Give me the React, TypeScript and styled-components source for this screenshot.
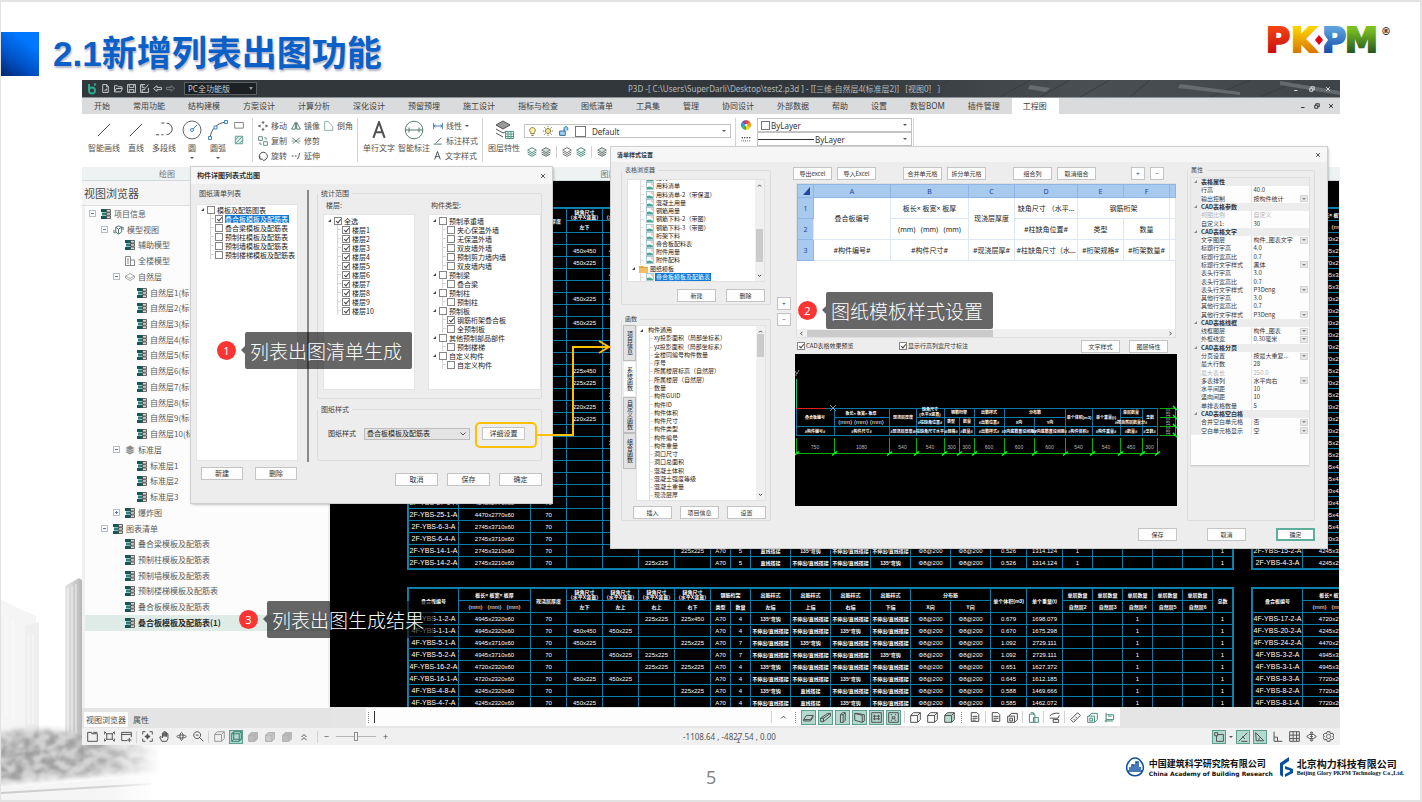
import React from "react";
import styled, { createGlobalStyle, css } from "styled-components";

const ui = `"Noto Sans CJK SC", "Noto Sans", sans-serif`;
const latin = `"Noto Sans", "Noto Sans CJK SC", sans-serif`;
const cad = `"Liberation Sans Narrow", "Liberation Sans", "Noto Sans CJK SC", sans-serif`;

const GlobalStyle = createGlobalStyle`
  * { box-sizing: border-box; }
  body { margin: 0; background: #fff; font-family: ${ui}; }
  button, input, select { font-family: inherit; margin: 0; }
  svg { display: block; flex: none; }
`;

/* ---------- slide ---------- */
const Slide = styled.main`
  position: relative;
  display: flex;
  flex-direction: column;
  min-height: 100vh;
  background: #fff;
  border: solid #e2e2e2;
  border-width: 2px 2px 2px 1px;
  overflow: hidden;
`;
const SlideHeader = styled.header`
  display: flex;
  height: 78px;
  flex: none;
  padding-right: 27px;
`;
const BlueBlock = styled.div`
  width: 38px;
  height: 44px;
  margin-top: 30px;
  background: linear-gradient(35deg, #00246c 0%, #0050c4 35%, #0078ff 75%);
`;
const SlideTitle = styled.h1`
  margin: 28px auto 0 14px;
  font: 700 35px/48px "Liberation Sans", "Noto Sans CJK SC", sans-serif;
  color: #0a60c6;
  text-shadow: 1px 2px 2px rgba(60, 70, 120, 0.4);
  white-space: nowrap;
`;
const PkpmMark = styled.svg`
  margin-top: 14px;
`;
const SlideFooter = styled.footer`
  position: relative;
  display: flex;
  align-items: flex-start;
  justify-content: flex-end;
  gap: 7px;
  height: 55px;
  flex: none;
  padding: 12px 16px 0 0;
`;
const PageNumber = styled.span`
  flex: 1;
  padding-left: 705px;
  font: 18px/40px "Noto Sans", sans-serif;
  color: #868686;
`;
const Company = styled.div`
  display: flex;
  align-items: center;
  gap: 4px;
  color: #111;
  white-space: nowrap;
`;
const CompanyName = styled.strong<{ $size: number }>`
  display: block;
  font: 700 ${(p) => p.$size}px/12px ${ui};
  color: #111;
`;
const CompanyEn = styled.small<{ $face: string }>`
  display: block;
  font: 700 6px/7px "${(p) => p.$face}", sans-serif;
`;
const Photo = styled.svg`
  position: absolute;
  left: 0;
  bottom: 0;
`;

/* ---------- application frame ---------- */
const AppFrame = styled.section`
  position: relative;
  display: flex;
  flex-direction: column;
  flex: 1;
  margin: 0 80px 0 81px;
  background: #f0f0f0;
  overflow: hidden;
`;
const TitleBar = styled.div`
  position: relative;
  display: flex;
  align-items: center;
  gap: 3px;
  height: 17px;
  flex: none;
  padding: 0 7px 0 5px;
  background: linear-gradient(90deg, #31373b 60%, #4a4f53 80%, #3e4448);
  color: #b4b8ba;
`;
const Streaks = styled.svg`
  position: absolute;
  right: 0;
  top: 0;
`;
const IconButton = styled.button<{ $on?: boolean; $w?: number }>`
  display: flex;
  align-items: center;
  justify-content: center;
  width: ${(p) => p.$w || 10}px;
  height: ${(p) => p.$w || 10}px;
  padding: 0;
  flex: none;
  background: ${(p) => (p.$on ? "#b4dad0" : "transparent")};
  border: 1px solid ${(p) => (p.$on ? "#5aa08f" : "transparent")};
  color: inherit;
`;
const ModeBox = styled.div`
  position: relative;
  width: 73px;
  height: 13px;
  margin-left: 6px;
`;
const ModeSelect = styled.select`
  appearance: none;
  display: block;
  width: 100%;
  height: 100%;
  padding: 0 3px;
  border: 1px solid #5d6164;
  background: #1d2022;
  color: #c9cccd;
  font: 8px/10px ${latin};
`;
const DocTitle = styled.div`
  flex: 1;
  padding-left: 368px;
  font: 8px/16px ${latin};
  white-space: pre;
  color: #b6babc;
`;
const WinControls = styled.div<{ $dark?: boolean }>`
  position: relative;
  display: flex;
  align-items: center;
  gap: 6px;
  margin-left: auto;
  padding-right: ${(p) => (p.$dark ? 5 : 0)}px;
  color: ${(p) => (p.$dark ? "#333" : "#d8dadb")};
`;
const TabStrip = styled.nav`
  display: flex;
  height: 17px;
  flex: none;
  padding-left: 1px;
  background: #dadbdc;
  border-top: 1px solid #8f9294;
`;
const RibbonTab = styled.button<{ $on?: boolean }>`
  padding: 0 12px 0 11px;
  border: 0;
  background: ${(p) => (p.$on ? "#fff" : "transparent")};
  color: #3e3e3e;
  font: 8px/16px ${latin};
  white-space: nowrap;
`;
const Ribbon = styled.div`
  display: flex;
  height: 67px;
  flex: none;
  background: #fff;
`;
const Group = styled.div<{ $w?: number }>`
  display: flex;
  flex-direction: column;
  ${(p) => (p.$w ? `width: ${p.$w}px; flex: none;` : "flex: 1;")}
`;
const GroupBody = styled.div<{ $gap: number; $line?: boolean }>`
  display: flex;
  gap: ${(p) => p.$gap}px;
  height: 44px;
  margin: 4px 0 5px;
  padding-left: ${(p) => (p.$line ? 5 : 6)}px;
  border-left: ${(p) => (p.$line ? "1px solid #d4d4d4" : "0")};
`;
const GroupName = styled.div`
  height: 14px;
  background: #eef2f3;
  border-bottom: 1px solid #d2d9db;
  font: 8px/13px ${ui};
  text-align: center;
  color: #777;
`;
const BigTool = styled.button`
  display: flex;
  flex-direction: column;
  align-items: center;
  min-width: 20px;
  padding: 0;
  border: 0;
  background: none;
  color: #505050;
  font: 8px/12px ${ui};
  white-space: nowrap;
`;
const IconSlot = styled.span`
  display: flex;
  align-items: center;
  height: 24px;
`;
const Caret = styled.i`
  width: 0;
  height: 0;
  border: 2px solid transparent;
  border-top-color: #555;
  border-bottom: 0;
`;
const LowCaret = styled(Caret)`
  margin-top: 3px;
`;
const ToolGrid = styled.div<{ $cols: number }>`
  display: grid;
  grid-template-columns: repeat(${(p) => p.$cols}, max-content);
  grid-auto-rows: 15px;
  column-gap: 4px;
  align-content: start;
`;
const SmallTool = styled.button`
  display: flex;
  align-items: center;
  gap: 3px;
  padding: 0;
  border: 0;
  background: none;
  color: #505050;
  font: 8px/14px ${ui};
  white-space: nowrap;
`;
const ToolStack = styled.div<{ $gap?: number; $pt?: number }>`
  display: flex;
  flex-direction: column;
  gap: ${(p) => p.$gap || 0}px;
  padding-top: ${(p) => p.$pt || 0}px;
`;
const LayerTools = styled.div`
  display: flex;
  align-items: center;
  gap: 4px;
  padding: 8px 0 0 3px;
  color: #777;
`;
const Rule = styled.i<{ $m?: number }>`
  width: 1px;
  height: 12px;
  margin: 0 ${(p) => (p.$m === undefined ? 2 : p.$m)}px;
  flex: none;
  background: #d2d2d2;
`;
const ComboBox = styled.div<{ $w: number }>`
  position: relative;
  display: flex;
  align-items: center;
  gap: 6px;
  width: ${(p) => p.$w}px;
  height: 14px;
  padding: 0 4px 0 3px;
  border: 1px solid #c3c3c3;
  background: #fff;
  color: #555;
`;
const ComboSelect = styled.select`
  appearance: none;
  flex: 1;
  min-width: 0;
  border: 0;
  background: none;
  font: 8px/11px "Noto Sans", sans-serif;
  color: #333;
`;
const TightSelect = styled(ComboSelect)`
  margin-left: -5px;
`;
const Swatch = styled.i<{ $s: number }>`
  width: ${(p) => p.$s}px;
  height: ${(p) => p.$s}px;
  border: 1px solid #777;
  background: #fff;
`;
const Stroke = styled.i`
  width: 56px;
  height: 1px;
  margin-left: -3px;
  background: #333;
`;

/* ---------- workspace ---------- */
const Workspace = styled.div`
  display: flex;
  flex: 1;
  min-height: 0;
`;
const Browser = styled.aside`
  display: flex;
  flex-direction: column;
  width: 248px;
  flex: none;
  background: #f0f0f0;
`;
const BrowserTitle = styled.h2`
  height: 25px;
  margin: 0;
  padding-left: 2px;
  border-bottom: 1px solid #dcdfe0;
  background: #f5f5f5;
  font: 400 11px/25px ${ui};
  color: #4a4a4a;
`;
const Tree = styled.ul`
  display: flex;
  flex-direction: column;
  flex: 1;
  margin: 0 2px 0 3px;
  padding: 0 0 77px;
  background: #fcfcfc;
  list-style: none;
`;
const TreeRow = styled.li<{ $level: number; $on?: boolean }>`
  display: flex;
  align-items: center;
  flex: 1;
  padding-left: ${(p) => 3 + p.$level * 12}px;
  background: ${(p) => (p.$on ? "#deebe7" : "none")};
  color: ${(p) => (p.$on ? "#2a2a2a" : "#5a5a5a")};
  font: ${(p) => (p.$on ? 700 : 400)} 8px/10px ${ui};
  white-space: nowrap;
  svg { margin: 0 3px 0 5px; }
`;
const Expander = styled.i<{ $show?: string }>`
  position: relative;
  width: 7px;
  height: 7px;
  margin-left: 1px;
  flex: none;
  border: 1px solid ${(p) => (p.$show ? "#b5bdc6" : "transparent")};
  &::before {
    content: "";
    position: absolute;
    left: 1px; right: 1px; top: 2px; height: 1px;
    background: ${(p) => (p.$show ? "#5a76ae" : "none")};
  }
  &::after {
    content: "";
    position: absolute;
    top: 1px; bottom: 1px; left: 2px; width: 1px;
    background: ${(p) => (p.$show === "+" ? "#5a76ae" : "none")};
  }
`;
const BrowserTabs = styled.div`
  display: flex;
  height: 20px;
  padding: 4px 0 1px 2px;
  background: #e4e4e4;
`;
const BrowserTab = styled.button<{ $on?: boolean }>`
  padding: 0 ${(p) => (p.$on ? 2 : 5)}px;
  border: 0;
  background: ${(p) => (p.$on ? "#fff" : "none")};
  color: #4a4a4a;
  font: 8px/14px ${ui};
`;
const Stage = styled.div`
  display: flex;
  flex-direction: column;
  flex: 1;
  min-width: 0;
`;
const Canvas = styled.div`
  display: flex;
  gap: 19px;
  flex: 1;
  min-height: 0;
  contain: size;
  margin-right: 1px;
  padding: 27px 0 0 78px;
  background: #000;
  overflow: hidden;
`;
const SheetColumn = styled.div`
  display: flex;
  flex-direction: column;
  gap: 19px;
  flex: none;
`;
const Sheet = styled.table`
  table-layout: fixed;
  width: 824px;
  border-collapse: collapse;
  outline: 1px solid #0f86b2;
  outline-offset: 0;
  color: #fff;
  font: 6px/10px ${cad};
  tr { height: 12px; }
  th, td {
    padding: 0;
    border: 1px solid #0b7dab;
    font-weight: 400;
    text-align: center;
    white-space: nowrap;
    overflow: hidden;
  }
  tbody td:first-child { font-size: 7px; }
`;
const Han = styled.span<{ $tight?: boolean }>`
  display: ${(p) => (p.$tight ? "block" : "inline")};
  font: 700 5px/${(p) => (p.$tight ? 5 : 9)}px ${cad};
`;
const CommandBar = styled.div`
  display: flex;
  align-items: center;
  height: 21px;
  flex: none;
  padding: 1px 0 2px 36px;
  background: #e5e5e5;
`;
const CommandInner = styled.div`
  display: flex;
  align-items: center;
  gap: 2px;
  width: 754px;
  height: 100%;
  background: #fdfdfd;
  color: #505050;
`;
const CommandInput = styled.input`
  flex: 1;
  min-width: 0;
  height: 12px;
  border: 0;
  border-left: 1px solid #333;
  background: none;
  font: 8px/12px ${ui};
`;
const Grip = styled.i`
  height: 11px;
  margin: 0 3px 0 2px;
  border-left: 1px dotted #8a8a8a;
`;
const StatusBar = styled.div`
  position: relative;
  display: flex;
  align-items: center;
  gap: 3px;
  height: 17px;
  flex: none;
  padding: 0 5px 0 3px;
  color: #555;
  font-size: 9px;
`;
const Coordinates = styled.span`
  flex: 1;
  padding-left: 292px;
  font: 8px/16px "Noto Sans", sans-serif;
  white-space: pre;
`;
const ZoomRange = styled.input`
  appearance: none;
  width: 40px;
  height: 9px;
  margin: 0 4px;
  background: linear-gradient(#b5b5b5, #b5b5b5) center / 100% 1px no-repeat;
  &::-webkit-slider-thumb {
    appearance: none;
    width: 4px;
    height: 9px;
    border: 1px solid #8d8d8d;
    background: #f4f4f4;
  }
`;
const StrayMark = styled.span`
  position: absolute;
  left: 654px;
  top: 9px;
  font: 8px/8px "Liberation Sans", sans-serif;
`;

/* ---------- dialogs ---------- */
const Dialog = styled.section<{ $x: number; $y: number; $w: number; $h: number; $size: number }>`
  position: absolute;
  left: ${(p) => p.$x}px;
  top: ${(p) => p.$y}px;
  width: ${(p) => p.$w}px;
  height: ${(p) => p.$h}px;
  display: flex;
  flex-direction: column;
  background: #ededed;
  box-shadow: 0 0 0 1px #cfcfcf, 1px 1px 3px rgba(0, 0, 0, 0.4);
  color: #333;
  font: ${(p) => p.$size}px/9px ${ui};
  white-space: nowrap;
`;
const DialogTitle = styled.header<{ $h: number }>`
  display: flex;
  align-items: center;
  justify-content: space-between;
  height: ${(p) => p.$h}px;
  flex: none;
  padding: 0 6px;
  background: #f6f6f6;
  font-weight: 700;
`;
const ListingBody = styled.div`
  display: flex;
  flex: 1;
  padding: 5px 10px 0 5px;
`;
const Col = styled.div<{ $w?: number; $gap?: number; $pl?: number }>`
  display: flex;
  flex-direction: column;
  gap: ${(p) => p.$gap || 0}px;
  padding-left: ${(p) => p.$pl || 0}px;
  ${(p) => (p.$w ? `width: ${p.$w}px; flex: none;` : "")}
`;
const Row = styled.div<{ $gap?: number; $end?: boolean; $pl?: number }>`
  display: flex;
  align-items: center;
  gap: ${(p) => p.$gap || 0}px;
  padding-left: ${(p) => p.$pl || 0}px;
  justify-content: ${(p) => (p.$end ? "flex-end" : "flex-start")};
`;
const VRule = styled.i`
  width: 2px;
  height: 272px;
  margin: 1px 8px 0 9px;
  background: #8a8a8a;
`;
const Caption = styled.div`
  padding-left: 3px;
  color: #444;
`;
const Fieldset = styled.fieldset<{ $h: number; $pad: string }>`
  display: flex;
  flex-direction: column;
  min-width: 0;
  height: ${(p) => p.$h}px;
  margin: 0;
  padding: ${(p) => p.$pad};
  border: 1px solid #dcdcdc;
  border-radius: 2px;
`;
const Legend = styled.legend`
  padding: 0 3px;
  line-height: 8px;
  color: #444;
`;
const PushButton = styled.button<{ $w?: number; $primary?: boolean }>`
  width: ${(p) => p.$w || 39}px;
  height: 13px;
  flex: none;
  padding: 0;
  background: #fdfdfd;
  border: ${(p) => (p.$primary ? "2px solid #5fae9c" : "1px solid #c4c4c4")};
  color: #333;
  font-size: inherit;
  line-height: 9px;
`;
const ListBox = styled.ul<{ $h: number; $pad?: string }>`
  position: relative;
  height: ${(p) => p.$h}px;
  margin: 0;
  padding: ${(p) => p.$pad || "0"};
  border: 1px solid #e4e4e4;
  background: #fff;
  list-style: none;
  overflow: hidden;
`;
const CheckRow = styled.li<{ $child?: boolean; $on?: boolean }>`
  display: flex;
  align-items: center;
  height: 9px;
  padding-left: ${(p) => (p.$child ? 14 : 0)}px;
  color: #222;
  ${(p) =>
    p.$child &&
    css`
      background:
        linear-gradient(#d5d5d5, #d5d5d5) 9px 0 / 1px 9px no-repeat,
        linear-gradient(#d5d5d5, #d5d5d5) 9px 4px / 4px 1px no-repeat;
    `}
  label { display: flex; align-items: center; gap: 2px; }
  span { line-height: 8px; padding: 0 1px 0 0; ${(p) => (p.$on ? "background:#0f78d4;color:#fff;" : "")} }
`;
const Twisty = styled.i`
  width: 0;
  height: 0;
  margin-right: 3px;
  border: solid transparent;
  border-width: 0 0 3px 3px;
  border-bottom-color: #444;
`;
const Check = styled.input.attrs({ type: "checkbox" })`
  appearance: none;
  position: relative;
  width: 8px;
  height: 8px;
  flex: none;
  border: 1px solid #858585;
  background: #fff;
  &:checked::after {
    content: "";
    position: absolute;
    left: 2px;
    top: 0;
    width: 2px;
    height: 4px;
    border: solid #444;
    border-width: 0 1px 1px 0;
    transform: rotate(40deg);
  }
`;
const CheckLabel = styled.label`
  display: flex;
  align-items: center;
  gap: 1px;
  line-height: 12px;
`;
const StyleSelect = styled.select`
  appearance: none;
  width: 106px;
  height: 12px;
  padding: 0 2px;
  border: 1px solid #bdbdbd;
  background: #e4e4e4;
  color: #222;
  font: 7px/9px ${ui};
`;
const SelectWrap = styled.div`
  position: relative;
  display: flex;
`;
const ArrowMark = styled.svg`
  position: absolute;
  right: 4px;
  top: 50%;
  margin-top: -2px;
  pointer-events: none;
`;
const StyleBody = styled.div`
  display: flex;
  flex: 1;
  padding: 4px 12px 0 10px;
`;
const Stepper = styled(Col)`
  width: 14px;
  margin: 0 4px 0 6px;
  padding-top: 131px;
  gap: 3px;
`;
const Editor = styled(Col)`
  width: 382px;
  margin-right: 10px;
  padding-top: 1px;
`;
const EditorTools = styled.div`
  display: flex;
  gap: 5px;
  height: 16px;
  margin-left: -2px;
`;
const Spacer = styled.i<{ $w: number }>`
  width: ${(p) => p.$w}px;
`;
const FileList = styled.ul<{ $h: number }>`
  display: flex;
  flex-direction: column;
  flex: none;
  height: ${(p) => p.$h}px;
  margin: 0;
  padding: 0;
  list-style: none;
`;
const FileBox = styled.div<{ $h: number; $end?: boolean; $w?: number }>`
  position: relative;
  display: flex;
  flex-direction: column;
  justify-content: ${(p) => (p.$end ? "flex-end" : "flex-start")};
  width: ${(p) => (p.$w ? `${p.$w}px` : "auto")};
  height: ${(p) => p.$h}px;
  flex: none;
  border: 1px solid #e2e2e2;
  background: #fff;
  overflow: hidden;
`;
const FileRow = styled.li<{ $pl: number; $on?: boolean }>`
  display: flex;
  align-items: center;
  gap: 1px;
  flex: 1;
  min-height: 0;
  padding-left: ${(p) => p.$pl}px;
  line-height: 8px;
  color: #222;
  ${(p) =>
    p.$pl > 12 &&
    css`
      background:
        linear-gradient(#dcdcdc, #dcdcdc) 12px 0 / 1px 9px no-repeat,
        linear-gradient(#dcdcdc, #dcdcdc) 12px 4px / 4px 1px no-repeat;
    `}
  span { padding: 0 1px; ${(p) => (p.$on ? "background:#0f78d4;color:#fff;" : "")} }
`;
const ScrollTrack = styled.div<{ $top: number; $h: number }>`
  position: absolute;
  top: 0;
  right: 0;
  bottom: 0;
  width: 9px;
  background: #f0f0f0;
  &::before {
    content: "";
    position: absolute;
    left: 1px;
    right: 1px;
    top: ${(p) => p.$top}px;
    height: ${(p) => p.$h}px;
    background: #cbcbcb;
  }
  svg { position: absolute; left: 2px; }
  svg:first-child { top: 3px; }
  svg:last-child { bottom: 3px; }
`;
const SideTabs = styled.div`
  display: flex;
  flex-direction: column;
  width: 13px;
  flex: none;
  height: 144px;
`;
const SideTab = styled.button<{ $on?: boolean }>`
  flex: 1;
  padding: 0;
  border: 1px solid ${(p) => (p.$on ? "#ececec" : "#bcbcbc")};
  background: ${(p) => (p.$on ? "#fff" : "#e2e2e2")};
  font-size: 6px;
  line-height: 10px;
  color: #222;
  writing-mode: vertical-rl;
  text-align: center;
`;
const GridPanel = styled.div`
  display: flex;
  flex-direction: column;
  justify-content: space-between;
  height: 155px;
  margin: 0 1px;
  border: 1px solid #dfdfdf;
  background: #fff;
`;
const Spread = styled.table`
  table-layout: fixed;
  width: 378px;
  border-collapse: collapse;
  font: 7px/9px ${latin};
  color: #222;
  th, td { padding: 0; border: 1px solid #dce8f6; font-weight: 400; text-align: center; overflow: hidden; white-space: pre; }
  th { background: #a9caef; border-color: #8fb5e3; color: #23459c; }
  thead tr { height: 13px; }
  tbody tr { height: 21px; }
`;
const HScroll = styled.div`
  display: flex;
  align-items: center;
  gap: 3px;
  height: 8px;
  padding: 0 2px;
  background: #f0f0f0;
  color: #555;
`;
const HThumb = styled.i`
  width: 186px;
  height: 7px;
  margin-right: auto;
  background: #cbcbcb;
`;
const EditorChecks = styled.div`
  display: flex;
  align-items: center;
  gap: 9px;
  height: 16px;
  padding: 0 9px 0 2px;
`;
const FirstCheck = styled.div`
  width: 93px;
`;
const SecondCheck = styled.div`
  flex: 1;
`;
const PropFrame = styled.div`
  flex: 1;
  margin-left: 2px;
  border: 1px solid #e0e0e0;
`;
const PropSheet = styled.div`
  height: 288px;
  background: #fdfdfd;
  border-bottom: 1px solid #ccc;
`;
const PropTable = styled.table`
  table-layout: fixed;
  width: 100%;
  height: 257px;
  border-collapse: collapse;
  font: 6px/8px ${ui};
  color: #333;
  td, th { padding: 0; text-align: left; overflow: hidden; white-space: nowrap; }
`;
const PropSection = styled.th`
  background: #ececec;
  font-weight: 700;
  i { display: inline-block; width: 5px; height: 5px; margin: 0 3px 0 2px; }
`;
const PropGutter = styled.td`
  background: #ececec;
`;
const PropName = styled.td<{ $dim?: boolean }>`
  border-right: 1px solid #e6e6e6;
  color: ${(p) => (p.$dim ? "#b0b0b0" : "inherit")};
`;
const PropValue = styled.td<{ $dim?: boolean }>`
  color: ${(p) => (p.$dim ? "#b0b0b0" : "inherit")};
  div { display: flex; align-items: center; justify-content: space-between; padding-left: 2px; }
`;
const PropDrop = styled.button`
  display: flex;
  align-items: center;
  justify-content: center;
  width: 8px;
  height: 7px;
  margin-right: 1px;
  padding: 0;
  border: 1px solid #d6d6d6;
  background: #e6e6e6;
  i { border-top-color: #888; }
`;
const StyleFooter = styled.footer`
  display: flex;
  justify-content: flex-end;
  gap: 30px;
  height: 20px;
  padding-right: 12px;
`;

/* ---------- annotations ---------- */
const Note = styled.div<{ $x: number; $y: number }>`
  position: absolute;
  left: ${(p) => p.$x}px;
  top: ${(p) => p.$y}px;
  display: flex;
  align-items: center;
  gap: 9px;
`;
const NoteDot = styled.span`
  width: 19px;
  height: 19px;
  border-radius: 50%;
  background: #fb3434;
  color: #fff;
  font: 11px/19px "Noto Sans", sans-serif;
  text-align: center;
`;
const NoteText = styled.span`
  position: relative;
  width: 167px;
  height: 37px;
  padding-left: 5px;
  border-radius: 2px;
  background: rgba(0, 0, 0, 0.6);
  color: #fff;
  font: 300 19px/37px ${ui};
  white-space: nowrap;
  &::before {
    content: "";
    position: absolute;
    left: -4px;
    top: 14px;
    border: solid transparent;
    border-width: 4px 4px 4px 0;
    border-right-color: rgba(0, 0, 0, 0.6);
  }
`;
const ArrowOverlay = styled.svg`
  position: absolute;
  left: 391px;
  top: 256px;
  pointer-events: none;
`;

/* ---------- icons ---------- */
const paths: Record<string, string> = {
  file: "M3 1h7l3 3v11H3zM10 1v4h3M6 11h4v-3",
  open: "M1 14V3h5l2 2h6v3M1 14l3-6h11l-3 6z",
  save: "M1 1h14v14H1zM4 1v5h8V1M4 15v-5h8v5",
  saveas: "M15 7v8H1V1h8M4 1v5h4M4 15v-5h5M8 9l7-8",
  back: "M1 8l6-5v3h8v4H7v3z",
  fwd: "M15 8l-6-5v3H1v4h8v3z",
  min: "M3 12h9",
  restore: "M2 6h8v8H2zM5 6V2h9v8h-4",
  close: "M3 3l10 10M13 3L3 13",
  line: "M1 15L15 1",
  arcseg: "M10 1c7 1 7 10 0 11M7 12H5M3 12H0M8 1H5",
  rect: "M1 4h14v9H1z",
  hatch: "M2 2h12v12H2zM2 8l6-6M2 14L14 2M8 14l6-6",
  move: "M8 1v4M8 11v4M1 8h4M11 8h4M6 3l2-2 2 2M6 13l2 2 2-2M3 6L1 8l2 2M13 6l2 2-2 2",
  mirror: "M7 2v11H1zM9 2l6 11H9z",
  chamfer: "M1 15V1h6l7 8v6z",
  copy: "M1 1h6v6H1zM9 9h6v6H9zM10 3h3v3M3 10v3h3",
  trim: "M2 3l11 9M14 3L3 12M1 8h3M12 8h3",
  rotate: "M3 12A6.500 6.500 0 1 1 8 15M3 8v5h5",
  extend: "M1 8h3M6 8h3M10 13c2-2 3-6 4-10",
  letter: "M3 15L8 1l5 14M5 10h6",
  dimcircle: "M8 1a7 7 0 1 0 .1 0M1 8h14M4 6v4M12 6v4",
  linear: "M1 3v10M15 3v10M1 8h14M4 6L1 8l3 2M12 6l3 2-3 2",
  mark: "M1 13h13M4 12l9-9",
  layers: "M1 5l7-4 7 4-7 4zM1 8l7 4 7-4M1 11l7 4 7-4",
  bulb: "M5 10C1 6 4 1 8 1s7 5 3 9v2H5zM6 15h4",
  sun: "M8 4a4 4 0 1 0 .1 0M8 0v2M8 14v2M0 8h2M14 8h2M2 2l2 2M12 12l2 2M14 2l-2 2M2 14l2-2",
  lock: "M1 8h9v7H1zM8 8V4c0-4 6-4 6 0v3",
  lines: "M1 6h2M5 6h2M9 6h2M13 6h2M1 11h1M4 11h1M7 11h1M10 11h1M13 11h1",
  folder: "M1 15V2h6v2h8v11zM9 2h6",
  fit: "M4 4h8v8H4zM1 1l3 3M15 1l-3 3M1 15l3-3M15 15l-3-3M1 5V1M15 5V1M1 11v4M15 11v4",
  panel: "M9 14H1V2h14v7M1 5h14M12 10v6M9 13h6",
  target: "M1 5V1h4M11 1h4v4M15 11v4h-4M5 15H1v-4M8 4v8M4 8h8M6 6h4v4H6z",
  hand: "M4 15L1 9l2-1 2 2V3h2v5V1h2v7V2h2v6V4h2v7l-2 4z",
  orbit: "M8 2c3 2 3 8 0 12M8 2c-3 2-3 8 0 12M1 8c2-3 12-3 14 0M1 8c2 3 12 3 14 0",
  zoom: "M6 1a5 5 0 1 0 .1 0M10 10l5 5M4 6h4",
  cube: "M1 5h10v10H1zM1 5l4-4h10v10l-4 4M11 5l4-4",
  cubein: "M1 4h11v11H1zM4 1h11v11H4zM1 4l3-3M12 4l3-3M1 15l3-3M12 15l3-3",
  up: "M4 8l4-4 4 4M4 13l4-4 4 4",
  chev: "M3 10l5-5 5 5",
  slab: "M1 11l4-6h10l-4 6zM1 11v2h10l4-6",
  beam: "M1 9l10-7h4v4L5 14H1zM1 9h4v5M5 9l10-7",
  col: "M5 4l3-3h4v11l-3 3H5zM5 4h4v11M9 4l3-3",
  wall: "M1 2l11 3v10L1 12zM1 2h4l10 2v9l-3 2",
  grid: "M1 1h14v14H1zM1 6h14M1 11h14M6 1v14M11 1v14",
  rebar: "M1 1h14v14H1zM5 4v8M11 4v8M3 6h10M3 10h10",
  opening: "M1 1h14v14H1zM4 4h2M10 4h2M4 12h2M10 12h2M6 7h4v3H6z",
  doc: "M2 1h9l3 3v11H2zM4 7h8M4 10h8M4 13h5",
  stack: "M1 6h10v9H1zM3 6l3-4h9v9l-4 4M4 9h4v4H4z",
  paste: "M2 3h8v12H2zM4 1h4v3M8 8h7v7H8z",
  truck: "M1 6c3-4 9-5 14-4M1 9h12l2-4M6 11h8v4H6z",
  ruler: "M1 11L11 1l4 4L5 15zM5 10l2 2M8 7l2 2",
  view: "M3 1v14M3 4h11v7H3M1 13h12M6 6h5",
  snap: "M1 1h5v5H1zM4 6v9h11V4H6",
  diag: "M1 15L15 1M5 15h10M7 7l4 4",
  angle: "M1 1l13 13H2zM6 14c0-4 1-5 3-5",
  perp: "M3 1v14h12M3 9h5v6",
  gear: "M8 5a3 3 0 1 0 .1 0M6 1h4l1 3 3-1 2 4-2 1 2 2-3 3-2-1-1 3H6l-1-3-3 1-2-4 2-1-2-2 3-3 2 1z",
  vis: "M1 8l4-3h6l4 3-4 3H5zM8 6v4M6 8h4M8 1l2 2H6zM8 15l2-2H6z",
  down: "M3 6l5 5 5-5",
  upch: "M3 11l5-5 5 5",
  left: "M11 3L5 8l6 5",
  right: "M5 3l6 5-6 5",
};
function Icon({ n, s = 10, c = "currentColor", w = 1, fill = "none" }: { n: string; s?: number; c?: string; w?: number; fill?: string }) {
  return (
    <svg width={s} height={s} viewBox="0 0 16 16" fill={fill} stroke={c} strokeWidth={(w * 16) / s} aria-hidden="true">
      <path d={paths[n]} />
    </svg>
  );
}
function ArcIcon() {
  return (
    <svg width="20" height="20" viewBox="0 0 20 20" fill="none" aria-hidden="true">
      <path d="M2 18C3 9 9 3 18 2" stroke="#555" />
      <path d="M.5 16.500h3v3h-3zM6 6h3v3H6zM16.500 .5h3v3h-3z" fill="#fff" stroke="#3f86cc" />
    </svg>
  );
}
function CircleIcon() {
  return (
    <svg width="20" height="20" viewBox="0 0 20 20" fill="none" aria-hidden="true">
      <circle cx="10" cy="10" r="9" stroke="#666" />
      <path d="M10 10l5-5" stroke="#3f86cc" />
      <circle cx="10" cy="10" r="1.500" fill="#fff" stroke="#3f86cc" />
    </svg>
  );
}
function LayerPropsIcon() {
  return (
    <svg width="20" height="20" viewBox="0 0 20 20" fill="none" aria-hidden="true">
      <path d="M2 5l7-4 7 4-7 4z" fill="#9a9a9a" stroke="#555" />
      <path d="M2 9l7 4 4-2M2 13l7 4" stroke="#555" />
      <path d="M11.500 11.500h8v7h-8zM11.500 14h8M11.500 16.500h8M14 11.500v7M17 11.500v7" fill="#fff" stroke="#4d9a86" />
    </svg>
  );
}
function Cabinet() {
  return (
    <svg width="10" height="10" viewBox="0 0 10 10" aria-hidden="true">
      <path d="M0 0h6v3H0zM0 7h6v3H0z" fill="#0f5a58" />
      <path d="M1 3.500h6v3H1z" fill="#2b7f7b" />
      <path d="M5.500 .5h4v2.500h-4zM5.500 3.700h4v2.500h-4zM5.500 7h4v2.500h-4z" fill="#d8d8d8" stroke="#444" strokeWidth=".8" />
    </svg>
  );
}
function SheetIcon() {
  return (
    <svg width="8" height="8" viewBox="0 0 8 8" aria-hidden="true">
      <rect x=".5" y=".5" width="7" height="7" fill="#f7fbfd" stroke="#8ab4c4" strokeWidth=".7" />
      <path d="M1 7V5l3-.5L7 6v1z" fill="#4aa98d" />
      <path d="M4.500 1.500h2v2z" fill="#e79b3b" />
    </svg>
  );
}
function FolderIcon() {
  return (
    <svg width="9" height="8" viewBox="0 0 9 8" aria-hidden="true">
      <path d="M0 1h4l1 1h4v6H0z" fill="#e8a33c" />
      <path d="M0 3h9v5H0z" fill="#f3bd62" />
    </svg>
  );
}
function Wheel() {
  const colors = ["#e94b35", "#f39c12", "#e6d22c", "#3eb34f", "#2c9ad6", "#7a4cc0"];
  return (
    <svg width="10" height="10" viewBox="-5 -5 10 10" aria-hidden="true">
      {colors.map((c, i) => (
        <path key={c} d="M0 0L0 -5A5 5 0 0 1 4.330 -2.500Z" fill={c} transform={`rotate(${i * 60})`} />
      ))}
      <circle r="1" fill="#fff" />
    </svg>
  );
}

/* ---------- data ---------- */
const tabs = ["开始", "常用功能", "结构建模", "方案设计", "计算分析", "深化设计", "预留预埋", "施工设计", "指标与检查", "图纸清单", "工具集", "管理", "协同设计", "外部数据", "帮助", "设置", "数智BOM", "插件管理", "工程图"];

type Node = [number, string, string, string];
const treeNodes: Node[] = [
  [0, "-", "cab", "项目信息"],
  [1, "-", "model", "模型视图"],
  [2, "", "cab", "辅助模型"],
  [2, "", "bld", "全楼模型"],
  [2, "-", "plane", "自然层"],
  ...Array.from({ length: 10 }, (_, i): Node => [3, "", "cab", i === 9 ? "自然层10(标" : `自然层${i + 1}(标…`]),
  [2, "-", "layers", "标准层"],
  [3, "", "cab", "标准层1"],
  [3, "", "cab", "标准层2"],
  [3, "", "cab", "标准层3"],
  [2, "+", "cab", "爆炸图"],
  [1, "-", "cab", "图表清单"],
  [2, "", "cab", "叠合梁模板及配筋表"],
  [2, "", "cab", "预制柱模板及配筋表"],
  [2, "", "cab", "预制墙模板及配筋表"],
  [2, "", "cab", "预制楼梯模板及配筋表"],
  [2, "", "cab", "叠合板模板及配筋表"],
  [2, "", "cab", "叠合板模板及配筋表(1)"],
];

const colWidths = [50, 72, 36, 36, 36, 36, 36, 20, 20, 40, 40, 40, 40, 40, 40, 36, 36, 30, 30, 30, 30, 30, 20];
const N = "不伸出/直线搭接";
const H = "135°弯钩";
const Z = "直线搭接";
const R = "Φ8@200";
const pad = (name: string, size: string, rest: string[]) => [name, size, "70", ...rest];
const lowerRows = [
  pad("4F-YBS-1-2-A", "4945x2320x60", ["", "", "225x225", "225x450", "A70", "4", H, N, N, N, R, R, "0.679", "1698.079", "", "", "1", "", "", "1"]),
  pad("4F-YBS-1-1-A", "4945x2320x60", ["450x450", "450x225", "", "", "A70", "4", N, N, H, N, R, R, "0.670", "1675.298", "", "", "1", "", "", "1"]),
  pad("4F-YBS-5-1-A", "4945x3710x60", ["450x225", "", "", "225x225", "A70", "7", N, H, N, N, R, R, "1.092", "2729.111", "", "", "1", "", "", "1"]),
  pad("4F-YBS-5-2-A", "4945x3710x60", ["", "450x225", "225x225", "", "A70", "7", N, N, N, H, R, R, "1.092", "2729.111", "", "", "1", "", "", "1"]),
  pad("4F-YBS-16-2-A", "4720x2320x60", ["", "", "225x225", "225x225", "A70", "4", H, N, N, N, R, R, "0.651", "1627.372", "", "", "1", "", "", "1"]),
  pad("4F-YBS-16-1-A", "4720x2320x60", ["450x225", "450x225", "", "", "A70", "4", N, N, H, N, R, R, "0.645", "1612.185", "", "", "1", "", "", "1"]),
  pad("4F-YBS-4-8-A", "4245x2320x60", ["", "", "", "225x225", "A70", "4", H, Z, N, N, R, R, "0.588", "1469.666", "", "", "1", "", "", "1"]),
  pad("4F-YBS-4-7-A", "4245x2320x60", ["450x225", "", "", "", "A70", "4", N, Z, H, N, R, R, "0.585", "1462.072", "", "", "1", "", "", "1"]),
];
const upperLeft: Record<number, string> = { 1: "450x450", 2: "450x225", 5: "450x225", 7: "450x225", 11: "225x450", 12: "225x225", 14: "220x225", 15: "220x225" };
const upperNext: Record<number, string> = { 1: "450x225", 3: "450x225", 5: "450x225", 9: "450x225", 11: "225x225", 13: "225x225", 14: "220x225", 17: "225x225" };
const upperNames = ["27-1", "25-1", "6-3", "6-4", "14-1", "14-2"];
const upperSizes = ["4245x2770x60", "4470x2770x60", "2745x3710x60", "2745x3710x60", "2745x3210x60", "2745x3210x60"];
const upperRows = Array.from({ length: 28 }, (_, i) => {
  const k = Math.max(0, i - 22);
  const row = pad(`2F-YBS-${upperNames[k]}-A`, upperSizes[k], [upperLeft[i] || "", upperNext[i] || "", "", "", "A70", "5", Z, N, N, H, R, R, "0.526", "1314.124", "1", "", "", "", "", "1"]);
  if (i === 26) { row[6] = "225x225"; row[10] = H; row[12] = N; }
  if (i === 27) row[5] = "225x225";
  return row;
});
const rightUpper = ["4720x2770", "4245x2770", "4470x2770", "4945x3210", "4945x3210", "7720x2020", "7720x2020", "7720x2020", "4720x2320", "4470x2320", "4470x2320", "4245x2320", "4470x2320", "4245x2320", "4720x2770", "4720x2770", "4720x2770", "4245x2320", "4245x2320", "2745x4210", "2745x4210", "2720x4210", "2720x4210", "2745x4210", "2745x4210", "2720x3210", "4245x3210", "4245x2320"].map((s, i) => [i === 27 ? "2F-YBS-4-3-A" : "2F-YBS-15-2-A", s + "x60"]);
const rightLower = [["17-2", "4720x2770"], ["20-2", "4245x2770"], ["24-2", "4470x2770"], ["3-2", "4945x3210"], ["3-1", "4945x3210"], ["8-3", "7720x2020"], ["8-2", "7720x2020"], ["8-1", "7720x2020"]].map((r) => [`4F-YBS-${r[0]}-A`, r[1] + "x60"]);

const isHan = (s: string) => /[\u4e00-\u9fff]/.test(s);
const cell = (s: string) => (isHan(s) ? <Han>{s}</Han> : s);

function PlateSheet({ rows }: { rows: string[][] }) {
  return (
    <Sheet>
      <colgroup>{colWidths.map((w, i) => <col key={i} style={{ width: w }} />)}</colgroup>
      <thead>
        <tr>
          <th rowSpan={2}><Han>叠合板编号</Han></th>
          <th><Han>板长× 板宽× 板厚</Han></th>
          <th rowSpan={2}><Han>现浇层厚度</Han></th>
          {[0, 1, 2, 3].map((i) => <th key={i}><Han $tight>缺角尺寸</Han><Han $tight>（水平X竖直）</Han></th>)}
          <th colSpan={2}><Han>钢筋桁架</Han></th>
          {[0, 1, 2, 3].map((i) => <th key={i}><Han>出筋样式</Han></th>)}
          <th colSpan={2}><Han>分布筋</Han></th>
          <th rowSpan={2}><Han>单个体积(m3)</Han></th>
          <th rowSpan={2}><Han>单个重量(t)</Han></th>
          {[2, 3, 4, 5, 6].map((i) => <th key={i}><Han>单层数量</Han></th>)}
          <th rowSpan={2}><Han>总数</Han></th>
        </tr>
        <tr>
          <th>(mm)&nbsp;&nbsp; (mm)&nbsp;&nbsp; (mm)</th>
          {["左下", "左上", "右上", "右下", "类型", "数量", "左端", "上端", "右端", "下端", "X向", "Y向", "自然层2", "自然层3", "自然层4", "自然层5", "自然层6"].map((t) => <th key={t}><Han>{t}</Han></th>)}
        </tr>
      </thead>
      <tbody>
        {rows.map((r, i) => <tr key={i}>{r.map((c, j) => <td key={j}>{cell(c)}</td>)}</tr>)}
      </tbody>
    </Sheet>
  );
}
const NarrowSheet = styled(Sheet)`
  width: 122px;
`;
function SideSheet({ rows }: { rows: string[][] }) {
  return (
    <NarrowSheet>
      <colgroup><col style={{ width: 50 }} /><col style={{ width: 72 }} /></colgroup>
      <thead>
        <tr><th rowSpan={2}><Han>叠合板编号</Han></th><th><Han>板长× 板宽× 板厚</Han></th></tr>
        <tr><th>(mm)&nbsp;&nbsp; (mm)&nbsp;&nbsp; (mm)</th></tr>
      </thead>
      <tbody>{rows.map((r, i) => <tr key={i}><td>{r[0]}</td><td>{r[1]}</td></tr>)}</tbody>
    </NarrowSheet>
  );
}

type CheckItem = { t: string; child?: boolean; checked?: boolean; on?: boolean };
function CheckTree({ items, h, p }: { items: CheckItem[]; h: number; p: string }) {
  return (
    <ListBox $h={h} $pad={p}>
      {items.map((it, i) => (
        <CheckRow key={i} $child={it.child} $on={it.on}>
          {!it.child && <Twisty />}
          <label><Check defaultChecked={it.checked} /><span>{it.t}</span></label>
        </CheckRow>
      ))}
    </ListBox>
  );
}
const listItems: CheckItem[] = [
  { t: "模板及配筋图表" },
  { t: "叠合板模板及配筋表", child: true, checked: true, on: true },
  { t: "叠合梁模板及配筋表", child: true },
  { t: "预制柱模板及配筋表", child: true },
  { t: "预制墙模板及配筋表", child: true },
  { t: "预制楼梯模板及配筋表", child: true },
];
const floorItems: CheckItem[] = [{ t: "全选", checked: true }, ...Array.from({ length: 10 }, (_, i) => ({ t: `楼层${i + 1}`, child: true, checked: true }))];
const typeItems: CheckItem[] = [
  { t: "预制承重墙" }, { t: "夹心保温外墙", child: true }, { t: "无保温外墙", child: true }, { t: "双皮墙外墙", child: true }, { t: "预制剪力墙内墙", child: true }, { t: "双皮墙内墙", child: true },
  { t: "预制梁" }, { t: "叠合梁", child: true }, { t: "预制柱" }, { t: "预制柱", child: true }, { t: "预制板" }, { t: "钢筋桁架叠合板", child: true, checked: true }, { t: "全预制板", child: true },
  { t: "其他预制部品部件" }, { t: "预制楼梯", child: true }, { t: "自定义构件" }, { t: "自定义构件", child: true },
];

function ListingDialog() {
  return (
    <Dialog $x={109} $y={87} $w={361} $h={336} $size={7} aria-label="构件详图列表式出图">
      <DialogTitle $h={17}>构件详图列表式出图<Icon n="close" s={6} c="#555" /></DialogTitle>
      <ListingBody>
        <Col $w={102} $gap={6}>
          <Caption>图纸清单列表</Caption>
          <CheckTree items={listItems} h={257} p="0 0 0 4px" />
          <Row $gap={12} $pl={5}><PushButton $w={42}>新建</PushButton><PushButton $w={42}>删除</PushButton></Row>
        </Col>
        <VRule />
        <Col $w={225} $gap={6}>
          <Fieldset $h={210} $pad="4px 0 0">
            <Legend>统计范围</Legend>
            <Row $gap={13} $pl={5}>
              <Col $w={92} $gap={4}><Caption>楼层:</Caption><CheckTree items={floorItems} h={176} p="1px 0 0 4px" /></Col>
              <Col $w={113} $gap={4}><Caption>构件类型:</Caption><CheckTree items={typeItems} h={176} p="1px 0 0 4px" /></Col>
            </Row>
          </Fieldset>
          <Fieldset $h={56} $pad="14px 0 0">
            <Legend>图纸样式</Legend>
            <Row $gap={8} $pl={10}>
              <label htmlFor="sheetStyle">图纸样式</label>
              <SelectWrap>
                <StyleSelect id="sheetStyle"><option>叠合板模板及配筋表</option></StyleSelect>
                <ArrowMark width="6" height="4" viewBox="0 0 6 4" fill="none" stroke="#555"><path d="M.5 .5L3 3L5.500 .5" /></ArrowMark>
              </SelectWrap>
              <Row $pl={4}><PushButton $w={43}>详细设置</PushButton></Row>
            </Row>
          </Fieldset>
          <Spacer $w={1} />
          <Row $gap={9} $end><PushButton $w={43}>取消</PushButton><PushButton $w={43}>保存</PushButton><PushButton $w={43}>确定</PushButton></Row>
        </Col>
      </ListingBody>
    </Dialog>
  );
}

const files = ["建材", "用料清单", "用料清单-2（带保温）", "混凝土用量", "钢筋用量", "钢筋下料-2（带图）", "钢筋下料-3（带图）", "桁架下料", "叠合板配料表", "附件用量", "附件配料"];
const funcs = ["xy投影面积（局部坐标系）", "yz投影面积（局部坐标系）", "全楼同编号构件数量", "序号", "所属楼层标高（自然层）", "所属楼层（自然层）", "数量", "构件GUID", "构件ID", "构件体积", "构件尺寸", "构件类型", "构件编号", "构件重量", "洞口尺寸", "洞口总面积", "混凝土体积", "混凝土强度等级", "混凝土重量", "现浇层厚", "桁架数量"];

type Prop = [string, string?, string?];
const props: Prop[] = [
  ["#表格属性"], ["行高", "40.0"], ["输出控制", "按构件统计", "d"],
  ["#CAD表格参数"], ["视图比例", "自定义", "x"], ["自定义1:", "30"],
  ["#CAD表格文字"], ["文字图层", "构件_图表文字", "d"], ["标题行字高", "4.0"], ["标题行宽高比", "0.7"], ["标题行文字样式", "黑体", "d"], ["表头行字高", "3.0"], ["表头行宽高比", "0.7"], ["表头行文字样式", "P3Deng", "d"], ["其他行字高", "3.0"], ["其他行宽高比", "0.7"], ["其他行文字样式", "P3Deng", "d"],
  ["#CAD表格线框"], ["线框图层", "构件_图表", "d"], ["外框线宽", "0.30毫米", "d"],
  ["#CAD表格分页"], ["分页设置", "按最大重复...", "d"], ["最大行数", "28"], ["最大表长", "250.0", "n"], ["多表排列", "水平向右", "d"], ["水平间距", "10"], ["竖向间距", "10"], ["单排表格数量", "5"],
  ["#CAD表格空白格"], ["合并空白单元格", "否", "d"], ["空白单元格显示", "空", "d"],
];

const PreviewText = styled.text<{ $s?: number; $c?: string }>`
  font: ${(p) => p.$s || 5}px ${cad};
  font-weight: ${(p) => (p.$c ? 400 : 700)};
  fill: ${(p) => p.$c || "#fff"};
  text-anchor: middle;
`;
function Preview() {
  const xs = [1, 39, 94, 121, 149, 164, 179, 209, 239, 270, 297, 325, 347, 362];
  const ys = [54, 63, 72, 81];
  const dims = ["750", "1080", "540", "540", "300", "300", "600", "600", "600", "540", "540", "450", "300"];
  const mid = (i: number, j = i + 1) => (xs[i] + xs[j]) / 2;
  return (
    <svg width="382" height="152" viewBox="0 0 382 152" shapeRendering="crispEdges">
      <rect width="382" height="152" fill="#000" />
      <path stroke="#0a78a6" fill="none" strokeWidth="1" d="M1 54H362V81.500H1zM1 72.500H362M39.500 63.500H94M121.500 63.500H270M325 63.500H347M39.500 54V81M94.500 54V81M121.500 54V81M149.500 54V81M164.500 63V81M179.500 54V81M209.500 54V81M239.500 63V81M270.500 54V81M297.500 54V81M325.500 54V81M347.500 54V81" />
      <path stroke="#00d090" d="M1.500 25V54" /><path stroke="#e02020" d="M1 54.500H30" />
      <g shapeRendering="auto" stroke="#aaa" strokeWidth=".8" fill="none"><path d="M35 51l6 6M41 51l-6 6M0 17l2 3 2-4M1 20v2" /></g>
      <path stroke="#00b400" fill="none" d={"M1 99.500H362" + xs.map((x) => `M${x}.5 84V99`).join("") + ys.map((y) => `M365 ${y}.5H381`).join("") + "M380.500 54V81"} />
      <path shapeRendering="auto" stroke="#00ff30" strokeWidth="1.500" d={xs.map((x) => `M${x - 2} 101.500l5-4`).join("") + ys.map((y) => `M378 ${y - 2}l4 4`).join("")} />
      {dims.map((d, i) => <PreviewText key={i} $c="#bbb" $s={5} x={mid(i)} y={95}>{d}</PreviewText>)}
      {ys.slice(0, 3).map((y) => <PreviewText key={y} $c="#bbb" $s={5} transform={`translate(375 ${y + 5}) rotate(-90)`}>180</PreviewText>)}
      <PreviewText $s={4} x={20} y={65}>叠合板编号</PreviewText>
      <PreviewText $s={4} x={66} y={61}>板长× 板宽× 板厚</PreviewText>
      <PreviewText $c="#f0f0f0" $s={6} x={66} y={70}>(mm)  (mm)  (mm)</PreviewText>
      <PreviewText $s={4} x={108} y={65}>现浇层厚度</PreviewText>
      <PreviewText $s={4} x={135} y={57}>缺角尺寸</PreviewText>
      <PreviewText $s={4} x={135} y={62}>(水平X竖直)</PreviewText>
      <PreviewText $s={4} x={135} y={70}>#柱缺角位置#</PreviewText>
      <PreviewText $s={4} x={164} y={60}>钢筋桁架</PreviewText>
      <PreviewText $s={4} x={156} y={69}>类型</PreviewText>
      <PreviewText $s={4} x={172} y={69}>数量</PreviewText>
      <PreviewText $s={4} x={194} y={60}>出筋样式</PreviewText>
      <PreviewText $s={4} x={194} y={70}>#出筋位置#</PreviewText>
      <PreviewText $s={4} x={240} y={60}>分布筋</PreviewText>
      <PreviewText $s={4} x={224} y={70}>X向</PreviewText>
      <PreviewText $s={4} x={255} y={70}>Y向</PreviewText>
      <PreviewText $s={4} x={284} y={65}>单个体积(m3)</PreviewText>
      <PreviewText $s={4} x={311} y={65}>单个重量(t)</PreviewText>
      <PreviewText $s={4} x={336} y={60}>单层数量</PreviewText>
      <PreviewText $s={4} x={336} y={70}>#按自然层数量分#</PreviewText>
      <PreviewText $s={4} x={355} y={65}>总数</PreviewText>
      {["#构件编号#", "#构件尺寸#", "#现浇层厚度#", "#柱缺角尺寸水平#", "#规格#", "#数量#", "#出筋样式#", "#X向底筋直径间距#", "#Y向底筋直径间距#", "#构件体积#", "#构件重量#", "#数量#", "#总数#"].map((t, i) => (
        <PreviewText key={i} $s={4} x={mid(i)} y={79}>{t}</PreviewText>
      ))}
    </svg>
  );
}

function StyleDialog() {
  return (
    <Dialog $x={529} $y={67} $w={716} $h={401} $size={6} aria-label="清单样式设置">
      <DialogTitle $h={15}>清单样式设置<Icon n="close" s={6} c="#555" /></DialogTitle>
      <StyleBody>
        <Col $w={150} $gap={10}>
          <Fieldset $h={139} $pad="5px 5px 0 0">
            <Legend>表格浏览器</Legend>
            <Col $gap={7} $pl={5}>
              <FileBox $h={103} $end>
                <FileList $h={107}>
                  {files.map((f) => <FileRow key={f} $pl={18}><SheetIcon /><span>{f}</span></FileRow>)}
                  <FileRow $pl={4}><Twisty /><FolderIcon /><span>图纸模板</span></FileRow>
                  <FileRow $pl={18} $on><SheetIcon /><span>叠合板模板及配筋表</span></FileRow>
                </FileList>
                <ScrollTrack $top={49} $h={33}><Icon n="upch" s={5} c="#444" /><Icon n="down" s={5} c="#444" /></ScrollTrack>
              </FileBox>
              <Row $gap={10} $end><PushButton>新建</PushButton><PushButton>删除</PushButton></Row>
            </Col>
          </Fieldset>
          <Fieldset $h={206} $pad="2px 4px 0 0">
            <Legend>函数</Legend>
            <Col $gap={5} $pl={1}>
              <SelectWrap>
                <SideTabs>
                  <SideTab>项目信息</SideTab><SideTab $on>系统函数</SideTab><SideTab>自定义函数</SideTab><SideTab>组合函数</SideTab>
                </SideTabs>
                <FileBox $h={176} $w={130}>
                  <FileList $h={182}>
                    <FileRow $pl={3}><Twisty /><span>构件通用</span></FileRow>
                    {funcs.map((f) => <FileRow key={f} $pl={16}><span>{f}</span></FileRow>)}
                  </FileList>
                  <ScrollTrack $top={8} $h={23}><Icon n="upch" s={5} c="#444" /><Icon n="down" s={5} c="#444" /></ScrollTrack>
                </FileBox>
              </SelectWrap>
              <Row $gap={8} $end><PushButton>插入</PushButton><PushButton>项目信息</PushButton><PushButton>设置</PushButton></Row>
            </Col>
          </Fieldset>
        </Col>
        <Stepper><PushButton $w={14}>+</PushButton><PushButton $w={14}>−</PushButton></Stepper>
        <Editor>
          <EditorTools>
            <PushButton>导出excel</PushButton><PushButton>导入Excel</PushButton><Spacer $w={17} />
            <PushButton>合并单元格</PushButton><PushButton>拆分单元格</PushButton><Spacer $w={17} />
            <PushButton>组合列</PushButton><PushButton>取消组合</PushButton><Spacer $w={25} />
            <PushButton $w={14}>+</PushButton><PushButton $w={14}>−</PushButton>
          </EditorTools>
          <GridPanel>
            <Spread>
              <colgroup>{[16, 77, 78, 46, 63, 46, 46, 6].map((w, i) => <col key={i} style={{ width: w }} />)}</colgroup>
              <thead>
                <tr>
                  <th><svg width="15" height="10" viewBox="0 0 15 10"><path d="M12 1v8H5z" fill="#23459c" /></svg></th>
                  {["A", "B", "C", "D", "E", "F", ""].map((c) => <th key={c}>{c}</th>)}
                </tr>
              </thead>
              <tbody>
                <tr><th>1</th><td rowSpan={2}>叠合板编号</td><td>板长× 板宽× 板厚</td><td rowSpan={2}>现浇层厚度</td><td>缺角尺寸 （水平…</td><td colSpan={2}>钢筋桁架</td><td /></tr>
                <tr><th>2</th><td>(mm)   (mm)   (mm)</td><td>#柱缺角位置#</td><td>类型</td><td>数量</td><td /></tr>
                <tr><th>3</th><td>#构件编号#</td><td>#构件尺寸#</td><td>#现浇层厚#</td><td>#柱缺角尺寸（水…</td><td>#桁架规格#</td><td>#桁架数量#</td><td /></tr>
              </tbody>
            </Spread>
            <HScroll><Icon n="left" s={5} /><HThumb /><Icon n="right" s={5} /></HScroll>
          </GridPanel>
          <EditorChecks>
            <FirstCheck><CheckLabel><Check defaultChecked />CAD表格效果预览</CheckLabel></FirstCheck>
            <SecondCheck><CheckLabel><Check defaultChecked />显示行高列宽尺寸标注</CheckLabel></SecondCheck>
            <PushButton>文字样式</PushButton><PushButton>图层特性</PushButton>
          </EditorChecks>
          <Preview />
        </Editor>
        <Col $w={128}>
          <Fieldset $h={355} $pad="3px 4px 2px 0">
            <Legend>属性</Legend>
            <PropFrame>
              <PropSheet>
                <PropTable>
                  <colgroup><col style={{ width: 10 }} /><col style={{ width: 50 }} /><col /></colgroup>
                  <tbody>
                    {props.map(([k, v, f]) =>
                      k[0] === "#" ? (
                        <tr key={k}><PropSection colSpan={3}><i><svg width="5" height="5" viewBox="0 0 5 5"><path d="M4 1v3H1z" fill="#888" /></svg></i>{k.slice(1)}</PropSection></tr>
                      ) : (
                        <tr key={k}>
                          <PropGutter />
                          <PropName $dim={f === "x" || f === "n"}>{k}</PropName>
                          <PropValue $dim={f === "x" || f === "n"}>
                            <div>{v}{f === "d" && <PropDrop aria-label={k}><Caret /></PropDrop>}</div>
                          </PropValue>
                        </tr>
                      )
                    )}
                  </tbody>
                </PropTable>
              </PropSheet>
            </PropFrame>
          </Fieldset>
        </Col>
      </StyleBody>
      <StyleFooter><PushButton>保存</PushButton><PushButton>取消</PushButton><PushButton $primary>确定</PushButton></StyleFooter>
    </Dialog>
  );
}

function NodeIcon({ k }: { k: string }) {
  if (k === "cab") return <Cabinet />;
  if (k === "model")
    return (
      <svg width="11" height="10" viewBox="0 0 12 10" fill="none" stroke="#4a6b68"><path d="M3 2l3-1.500L9.500 2v5L6 9.500 3 7zM3 2l3 2 3.500-2M6 4v5M1 5v3h2M11 5V2H9" /></svg>
    );
  if (k === "bld") return <svg width="10" height="10" viewBox="0 0 10 10" fill="none" stroke="#888"><path d="M.5 9.500v-9h5v9zM5.500 4h4v5.500M2 3h2M2 5h2M2 7h2M0 9.500h10" /></svg>;
  if (k === "plane") return <svg width="10" height="10" viewBox="0 0 10 10" fill="none" stroke="#aaa"><path d="M.5 4L5 1.500 9.500 4 5 6.500zM.5 4v2L5 8.500 9.500 6V4" /></svg>;
  return <svg width="10" height="10" viewBox="0 0 10 10" fill="#888" stroke="#fff" strokeWidth=".5"><path d="M0 7l5-2.500L10 7l-5 2.700z" /><path d="M0 5l5-2.500L10 5 5 7.500z" /><path d="M0 3l5-2.700L10 3 5 5.500z" /></svg>;
}

function RibbonBar() {
  return (
    <Ribbon>
      <Group $w={170}>
        <GroupBody $gap={6}>
          <BigTool><IconSlot><Icon n="line" s={14} /></IconSlot>智能画线</BigTool>
          <BigTool><IconSlot><Icon n="line" s={14} /></IconSlot>直线</BigTool>
          <BigTool><IconSlot><Icon n="arcseg" s={17} /></IconSlot>多段线</BigTool>
          <BigTool><IconSlot><CircleIcon /></IconSlot>圆<LowCaret /></BigTool>
          <BigTool><IconSlot><ArcIcon /></IconSlot>圆弧<LowCaret /></BigTool>
          <ToolStack $gap={5} $pt={2}><Icon n="rect" s={10} c="#888" /><Icon n="hatch" s={10} c="#6aa294" fill="#d9ebe6" /></ToolStack>
        </GroupBody>
        <GroupName>绘图</GroupName>
      </Group>
      <Group $w={105}>
        <GroupBody $gap={4} $line>
          <ToolGrid $cols={3}>
            <SmallTool><Icon n="move" />移动</SmallTool><SmallTool><Icon n="mirror" c="#5c7f78" />镜像</SmallTool><SmallTool><Icon n="chamfer" c="#8fb3aa" />倒角</SmallTool>
            <SmallTool><Icon n="copy" c="#6b8f88" />复制</SmallTool><SmallTool><Icon n="trim" c="#5c7f78" />修剪</SmallTool><span />
            <SmallTool><Icon n="rotate" />旋转</SmallTool><SmallTool><Icon n="extend" />延伸</SmallTool>
          </ToolGrid>
        </GroupBody>
        <GroupName>修改</GroupName>
      </Group>
      <Group $w={125}>
        <GroupBody $gap={3} $line>
          <BigTool><IconSlot><Icon n="letter" s={18} w={2} /></IconSlot>单行文字</BigTool>
          <BigTool><IconSlot><Icon n="dimcircle" s={20} c="#4f7a70" /></IconSlot>智能标注</BigTool>
          <ToolGrid $cols={1}>
            <SmallTool><Icon n="linear" c="#4c86c6" />线性 <Caret /></SmallTool>
            <SmallTool><Icon n="mark" c="#5c7f78" />标注样式</SmallTool>
            <SmallTool><Icon n="letter" s={9} />文字样式</SmallTool>
          </ToolGrid>
        </GroupBody>
        <GroupName>注释</GroupName>
      </Group>
      <Group $w={253}>
        <GroupBody $gap={4} $line>
          <BigTool><IconSlot><LayerPropsIcon /></IconSlot>图层特性</BigTool>
          <ToolStack $pt={6}>
            <ComboBox $w={207}>
              <Icon n="bulb" s={9} c="#8a7a30" fill="#fbf3b4" /><Icon n="sun" c="#7a7440" fill="#fbe79a" /><Icon n="lock" c="#2f6f9a" fill="#9fd2ee" /><Swatch $s={11} />
              <ComboSelect aria-label="图层"><option>Default</option></ComboSelect><Caret />
            </ComboBox>
            <LayerTools>
              <Icon n="layers" c="#4d8f80" /><Icon n="layers" fill="#c9dfd9" /><Rule $m={1} /><Icon n="layers" /><Icon n="layers" c="#4d8f80" /><Rule $m={1} /><Icon n="layers" fill="#c9dfd9" /><Icon n="layers" /><Icon n="layers" />
            </LayerTools>
          </ToolStack>
        </GroupBody>
        <GroupName>图层</GroupName>
      </Group>
      <Group $w={178}>
        <GroupBody $gap={6} $line>
          <ToolStack $gap={4} $pt={2}><Wheel /><Icon n="lines" /></ToolStack>
          <ToolStack>
            <ComboBox $w={155}><Swatch $s={9} /><TightSelect aria-label="颜色"><option>ByLayer</option></TightSelect><Caret /></ComboBox>
            <ComboBox $w={155}><Stroke /><TightSelect aria-label="线型"><option>ByLayer</option></TightSelect><Caret /></ComboBox>
          </ToolStack>
        </GroupBody>
        <GroupName>特性</GroupName>
      </Group>
      <Group><GroupBody $gap={0} $line /><GroupName /></Group>
    </Ribbon>
  );
}

export default function App() {
  return (
    <Slide>
      <GlobalStyle />
      <Photo width="210" height="250" viewBox="0 0 210 250" aria-hidden="true">
        <defs>
          <filter id="leaf" x="0" y="0" width="100%" height="100%" colorInterpolationFilters="sRGB">
            <feTurbulence type="fractalNoise" baseFrequency=".09 .13" numOctaves="4" seed="4" />
            <feColorMatrix values="0 0 0 0 .6  0 0 0 0 .6  0 0 0 0 .6  3 0 0 0 -1.1" />
            <feGaussianBlur stdDeviation="1" />
          </filter>
          <filter id="edge"><feGaussianBlur stdDeviation="3" /></filter>
          <linearGradient id="fadeX"><stop offset="0" stopColor="#fff" /><stop offset=".5" stopColor="#fff" stopOpacity=".85" /><stop offset=".76" stopColor="#fff" stopOpacity="0" /></linearGradient>
          <mask id="soft"><rect width="210" height="250" fill="url(#fadeX)" /></mask>
          <mask id="trees"><path d="M-10 186C30 176 60 180 90 186L220 200V218L80 226L-10 234z" fill="#fff" filter="url(#edge)" /></mask>
          <linearGradient id="tower"><stop offset="0" stopColor="#e6e6e6" /><stop offset="1" stopColor="#b4b4b4" /></linearGradient>
        </defs>
        <path d="M0 50L35 66V200H0z" fill="#f5f5f5" />
        <path d="M24 76l14-4v120H24z" fill="#efefef" />
        <path d="M64 36l14-8 4 3v180H64z" fill="url(#tower)" />
        <path d="M67 38v146M71 36v148M75 34v150M28 84v90M32 84v90M5 66v100M12 70v100" stroke="#fff" strokeWidth="1" opacity=".7" />
        <g mask="url(#soft)">
          <g mask="url(#trees)">
            <rect y="165" width="210" height="75" fill="#d0d0d0" />
            <rect y="165" width="210" height="75" filter="url(#leaf)" />
          </g>
          <path d="M0 238L150 226V250H0z" fill="#f4f4f4" />
          <path d="M0 243L150 234" stroke="#ccc" strokeWidth="2" />
        </g>
      </Photo>
      <SlideHeader>
        <BlueBlock />
        <SlideTitle>2.1新增列表出图功能</SlideTitle>
        <PkpmMark width="128" height="46" viewBox="0 0 128 46" role="img" aria-label="PKPM">
          <defs>
            {[["r", "#f04010", "#c81010"], ["y", "#fbd000", "#d87800"], ["b", "#5aa0dc", "#1a4cae"], ["g", "#7cc020", "#285a20"]].map(([id, a, b]) => (
              <linearGradient key={id} id={`pk${id}`} x1="0" y1="0" x2="0" y2="1"><stop offset=".2" stopColor={a} /><stop offset=".8" stopColor={b} /></linearGradient>
            ))}
          </defs>
          <g fontFamily="DejaVu Sans" fontWeight="700" fontSize="33" strokeWidth="2">
            <text x="1" y="36" fill="url(#pkr)" stroke="url(#pkr)">P</text>
            <text x="26" y="36" fill="url(#pky)" stroke="url(#pky)">K</text>
            <text x="57" y="36" fill="url(#pkb)" stroke="url(#pkb)">P</text>
            <text x="80" y="36" fill="url(#pkg)" stroke="url(#pkg)">M</text>
          </g>
          <path d="M54 11l9 13-9 13-9-13z" fill="#fff" />
          <path d="M54 19l4 5-4 5-4-5z" fill="#e60012" />
          <text x="116" y="19" fontFamily="DejaVu Sans" fontWeight="700" fontSize="10" fill="#222">®</text>
        </PkpmMark>
      </SlideHeader>

      <AppFrame>
        <TitleBar>
          <Streaks width="460" height="17" viewBox="0 0 460 17" fill="none">
            <path d="M40 17L70 0M120 17L150 0M160 17l30-17M200 17l30-17M250 17l20-17M330 17L370 0M380 17L420 0" stroke="#383d41" />
            <path d="M300 4l60 8v3l-62-7zM400 1l60 10v4l-60-10zM150 5l20 3-4 4-18-3z" fill="#7d8285" opacity=".6" />
          </Streaks>
          <svg width="10" height="12" viewBox="0 0 10 12" fill="none" stroke="#2fa58c" strokeWidth="2"><circle cx="5" cy="7.500" r="3" /><path d="M2 1v6M7 2l2-1" /></svg>
          {["file", "open", "save", "saveas", "back", "fwd"].map((n) => <IconButton key={n} aria-label={n}><Icon n={n} s={9} c={n === "fwd" ? "#767b7e" : "#c4c7c8"} /></IconButton>)}
          <ModeBox>
            <ModeSelect aria-label="工作模式"><option>PC全功能版</option></ModeSelect>
            <ArrowMark width="4" height="3" viewBox="0 0 4 3"><path d="M0 0h4L2 3z" fill="#999" /></ArrowMark>
          </ModeBox>
          <DocTitle>{"P3D -[ C:\\Users\\SuperDarli\\Desktop\\test2.p3d ] - [[三维-自然层4(标准层2)]   [视图0]   ]"}</DocTitle>
          <WinControls>{["min", "restore", "close"].map((n) => <IconButton key={n} aria-label={n}><Icon n={n} s={6} /></IconButton>)}</WinControls>
        </TitleBar>
        <TabStrip>
          {tabs.map((t) => <RibbonTab key={t} $on={t === "工程图"}>{t}</RibbonTab>)}
          <WinControls $dark>{["min", "restore", "close"].map((n) => <IconButton key={n} $w={8} aria-label={n}><Icon n={n} s={6} /></IconButton>)}</WinControls>
        </TabStrip>
        <RibbonBar />
        <Workspace>
          <Browser>
            <BrowserTitle>视图浏览器</BrowserTitle>
            <Tree>
              {treeNodes.map(([lv, ex, ic, t], i) => (
                <TreeRow key={i} $level={lv} $on={i === treeNodes.length - 1}><Expander $show={ex} /><NodeIcon k={ic} />{t}</TreeRow>
              ))}
            </Tree>
            <BrowserTabs><BrowserTab $on>视图浏览器</BrowserTab><BrowserTab>属性</BrowserTab></BrowserTabs>
          </Browser>
          <Stage>
            <Canvas>
              <SheetColumn><PlateSheet rows={upperRows} /><PlateSheet rows={lowerRows} /></SheetColumn>
              <SheetColumn><SideSheet rows={rightUpper} /><SideSheet rows={rightLower} /></SheetColumn>
            </Canvas>
            <CommandBar>
              <CommandInner>
                <Grip /><CommandInput aria-label="命令" /><Rule />
                <IconButton $w={15} aria-label="chev"><Icon n="chev" s={7} /></IconButton><Grip />
                {["slab", "beam", "col", "wall", "rebar", "opening"].map((n) => <IconButton key={n} $w={15} $on aria-label={n}><Icon n={n} s={11} /></IconButton>)}
                <Rule $m={1} />
                {["cube", "cube", "cube"].map((n, i) => <IconButton key={i} $w={15} aria-label={n}><Icon n={n} s={11} fill={i === 2 ? "#b9dbd2" : "none"} /></IconButton>)}
                <Grip /><IconButton $w={15} aria-label="doc"><Icon n="doc" s={10} /></IconButton><Rule $m={1} />
                <IconButton $w={14} aria-label="doc2"><Icon n="doc" s={10} /></IconButton><IconButton $w={14} aria-label="stack"><Icon n="stack" s={11} /></IconButton><Rule $m={1} />
                <IconButton $w={14} aria-label="paste"><Icon n="paste" s={11} c="#4d8f80" /></IconButton><Rule $m={1} />
                <IconButton $w={14} aria-label="truck"><Icon n="truck" s={11} /></IconButton><Rule $m={1} />
                {["ruler", "stack", "view"].map((n) => <IconButton key={n} $w={15} aria-label={n}><Icon n={n} s={11} c={n === "ruler" ? "#555" : "#4d8f80"} /></IconButton>)}
                <Spacer $w={1} />
              </CommandInner>
            </CommandBar>
          </Stage>
        </Workspace>
        <StatusBar>
          {["folder", "fit", "panel"].map((n) => <IconButton key={n} $w={14} aria-label={n}><Icon n={n} s={11} /></IconButton>)}
          <Rule $m={0} />
          {["target", "hand", "orbit", "zoom"].map((n) => <IconButton key={n} $w={14} aria-label={n}><Icon n={n} s={11} /></IconButton>)}
          <Rule $m={0} />
          <IconButton $w={14} aria-label="wire"><Icon n="cube" s={11} c="#999" /></IconButton>
          <IconButton $w={14} $on aria-label="hidden"><Icon n="cubein" s={11} c="#3f7f72" /></IconButton>
          {["#bbb", "#ccc", "#bdbdbd"].map((c, i) => <IconButton key={i} $w={14} aria-label="shade"><Icon n="cube" s={10} c="#b0b0b0" fill={c} /></IconButton>)}
          <IconButton $w={14} aria-label="more"><Icon n="up" s={10} /></IconButton>
          <Rule $m={3} />
          <span>−</span>
          <ZoomRange type="range" aria-label="缩放" defaultValue={50} />
          <span>+</span>
          <Coordinates>-1108.64 , -4827.54 , 0.00</Coordinates>
          <IconButton $w={14} $on aria-label="snap"><Icon n="snap" s={10} /></IconButton><Caret />
          <IconButton $w={14} $on aria-label="diag"><Icon n="diag" s={10} /></IconButton>
          <IconButton $w={14} $on aria-label="angle"><Icon n="angle" s={10} /></IconButton>
          {["perp", "grid", "vis", "gear"].map((n) => <IconButton key={n} $w={14} aria-label={n}><Icon n={n} s={11} /></IconButton>)}
          <StrayMark>1</StrayMark>
        </StatusBar>

        <ListingDialog />
        <StyleDialog />
        <ArrowOverlay width="142" height="116" viewBox="0 0 142 116" fill="none" stroke="#ffc000" strokeWidth="2">
          <rect x="3" y="87" width="60" height="24" rx="4" />
          <path d="M63 99H100V11H136M126 5l10 6-10 6" />
        </ArrowOverlay>
        <Note $x={135} $y={252}><NoteDot>1</NoteDot><NoteText>列表出图清单生成</NoteText></Note>
        <Note $x={716} $y={212}><NoteDot>2</NoteDot><NoteText>图纸模板样式设置</NoteText></Note>
        <Note $x={157} $y={521}><NoteDot>3</NoteDot><NoteText>列表出图生成结果</NoteText></Note>
      </AppFrame>

      <SlideFooter>
        <PageNumber>5</PageNumber>
        <Company>
          <svg width="20" height="20" viewBox="0 0 20 20" fill="none" stroke="#0b4fa0"><path d="M3 15C-1 9 5 1 10 1s11 8 7 14M3 15c3 5 11 5 14 0M2 14h16" strokeWidth="1.500" /><path d="M7 13V8h2v5M11 13V5h2v8M5 13v-3M15 13v-3" strokeWidth="1.500" /></svg>
          <div><CompanyName $size={9}>中国建筑科学研究院有限公司</CompanyName><CompanyEn $face="DejaVu Sans">China Academy of Building Research</CompanyEn></div>
        </Company>
        <Company>
          <svg width="13" height="20" viewBox="0 0 13 20" fill="#0b4fa0"><path d="M9 0L0 6v12l3 2V8l6-4zM5 9l8 3v4l-8 4v-3l5-2.500v-1L5 12z" /></svg>
          <div><CompanyName $size={10}>北京构力科技有限公司</CompanyName><CompanyEn $face="Liberation Serif">Beijing Glory PKPM Technology Co.,Ltd.</CompanyEn></div>
        </Company>
      </SlideFooter>
    </Slide>
  );
}
